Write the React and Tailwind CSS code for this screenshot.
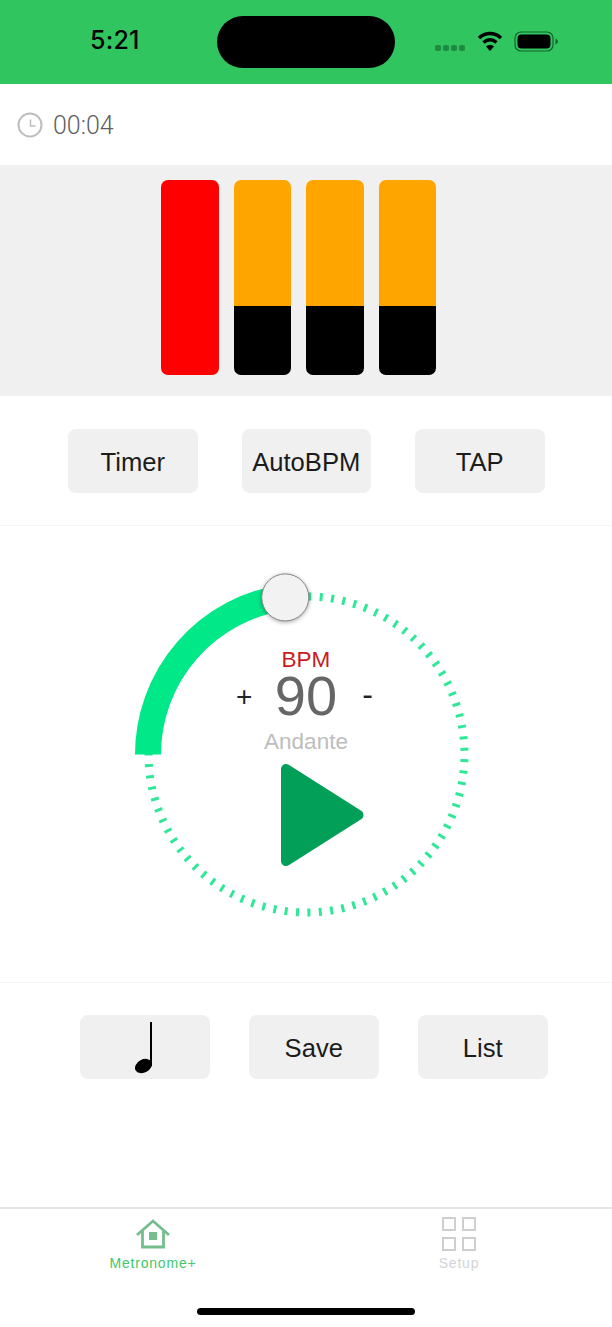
import React from "react";

const CX = 306.5;
const CY = 754.5;

// tick marks run clockwise from the top of the dial, degrees measured from 12 o'clock
const ticks = Array.from({ length: 87 }, (_, i) => 1.2 + i * (360 / 87)).filter(
  (deg) => deg < 272
);

const polar = (r, deg) => {
  const rad = (deg * Math.PI) / 180;
  return [CX + r * Math.sin(rad), CY - r * Math.cos(rad)];
};

const ActionButton = ({ children }) => (
  <button className="w-[129.5px] h-[64px] pt-[2px] rounded-[8px] bg-[#f0f0f0] flex items-center justify-center text-[25.6px] text-[#1c1c1c] font-['Liberation_Sans',sans-serif]">
    {children}
  </button>
);

const Bar = ({ red }) => (
  <div className="w-[57.5px] h-[194.5px] rounded-[7px] overflow-hidden flex flex-col">
    {red ? (
      <div className="flex-1 bg-[#ff0000]" />
    ) : (
      <>
        <div className="h-[126px] bg-[#ffa500]" />
        <div className="flex-1 bg-black" />
      </>
    )}
  </div>
);

const Dial = () => {
  const [tx, ty] = polar(158.5, -7.7);
  return (
    <svg width="612" height="456" viewBox="0 526 612 456" className="block">
      {ticks.map((deg) => {
        const [x1, y1] = polar(154, deg);
        const [x2, y2] = polar(162, deg);
        return (
          <line
            key={deg}
            x1={x1}
            y1={y1}
            x2={x2}
            y2={y2}
            stroke="#2ee897"
            strokeWidth="3"
          />
        );
      })}
      <path
        d={`M ${CX - 158.5} ${CY} A 158.5 158.5 0 0 1 ${tx} ${ty}`}
        fill="none"
        stroke="#00e887"
        strokeWidth="26"
      />
      <circle
        cx={tx}
        cy={ty}
        r="23.5"
        fill="#f2f2f2"
        stroke="#888888"
        strokeWidth="1"
        className="drop-shadow-[0_1px_2px_rgba(0,0,0,0.35)]"
      />
      <path
        d="M286 769 L358.5 815 L286 861 Z"
        fill="#029f59"
        stroke="#029f59"
        strokeWidth="10"
        strokeLinejoin="round"
      />
    </svg>
  );
};

export default function App() {
  return (
    <div className="w-[612px] h-[1327px] bg-white flex flex-col overflow-hidden font-['Liberation_Sans',sans-serif]">
      {/* Status bar */}
      <div className="relative h-[84px] bg-[#30c55e] shrink-0 flex items-center">
        <span className="ml-[90px] -mt-[3px] text-[25px] font-medium text-black font-['Inter',sans-serif] leading-none tracking-[0.2px]">
          5:21
        </span>
        <div className="absolute left-[217px] top-[16px] w-[178px] h-[52px] rounded-full bg-black" />
        <div className="absolute left-[435px] top-[45px] flex gap-[2px]">
          <span className="w-[6px] h-[6px] rounded-[2px] bg-[#1f8a45]" />
          <span className="w-[6px] h-[6px] rounded-[2px] bg-[#1f8a45]" />
          <span className="w-[6px] h-[6px] rounded-[2px] bg-[#1f8a45]" />
          <span className="w-[6px] h-[6px] rounded-[2px] bg-[#1f8a45]" />
        </div>
        <svg
          className="absolute left-[476px] top-[30px]"
          width="28"
          height="22"
          viewBox="0 0 26 22"
          fill="none"
          stroke="black"
          strokeWidth="3.6"
        >
          <path d="M2 8 C8.5 2 17.5 2 24 8" />
          <path d="M6.5 12.5 C10.5 9 15.5 9 19.5 12.5" />
          <path d="M13 20.5 L9.5 16.5 C11.5 15 14.5 15 16.5 16.5 Z" fill="black" strokeWidth="1" />
        </svg>
        <svg
          className="absolute left-[514px] top-[30px]"
          width="46"
          height="23"
          viewBox="0 0 46 23"
        >
          <rect x="1" y="2" width="38" height="19" rx="6" fill="none" stroke="#14622f" strokeWidth="1.2" />
          <rect x="3.5" y="4.5" width="33" height="14" rx="4" fill="black" />
          <path d="M41.5 8.5 Q44 10 44 11.5 Q44 13 41.5 14.5 Z" fill="#14622f" />
        </svg>
      </div>

      {/* Elapsed time */}
      <div className="h-[81px] shrink-0 flex items-center pl-[17px] gap-[10px]">
        <svg width="26" height="26" viewBox="0 0 26 26" fill="none" stroke="#bdbdbd" strokeWidth="2">
          <circle cx="13" cy="13" r="11.5" />
          <path d="M13.5 7.5 V14 H18.5" strokeWidth="1.5" />
        </svg>
        <span className="mt-[2px] text-[25px] font-light text-[#5f5f5f] font-['Roboto',sans-serif] leading-none">
          00:04
        </span>
      </div>

      {/* Beat bars */}
      <div className="h-[231px] shrink-0 bg-[#f0f0f0] flex items-start gap-[15px] pl-[161px] pt-[15px]">
        <Bar red />
        <Bar />
        <Bar />
        <Bar />
      </div>

      {/* Top buttons */}
      <div className="h-[130px] shrink-0 border-b border-[#f4f4f4] flex items-start gap-[44px] pl-[68px] pt-[33px]">
        <ActionButton>Timer</ActionButton>
        <ActionButton>AutoBPM</ActionButton>
        <ActionButton>TAP</ActionButton>
      </div>

      {/* Tempo dial */}
      <div className="relative h-[457px] shrink-0 border-b border-[#f4f4f4]">
        <Dial />
        <div className="absolute left-0 top-[121px] w-[612px] flex flex-col items-center">
          <span className="text-[22.5px] leading-[26px] text-[#cc1a22]">BPM</span>
          <div className="relative mt-[3px] w-[140px] flex justify-center">
            <span className="text-[56px] leading-[40px] text-[#666666]">90</span>
            <span className="absolute left-0 top-[5px] text-[28px] leading-[32px] text-[#222222]">+</span>
            <span className="absolute right-[3px] top-[2px] text-[32px] leading-[32px] text-[#222222]">-</span>
          </div>
          <span className="mt-[13px] text-[22.5px] leading-[26px] text-[#bdbdbd]">Andante</span>
        </div>
      </div>

      {/* Bottom buttons */}
      <div className="h-[224px] shrink-0 flex items-start gap-[39.5px] pl-[80px] pt-[32px]">
        <ActionButton>
          <svg width="24" height="52" viewBox="0 0 24 52">
            <rect x="17" y="0" width="2" height="44" fill="black" />
            <ellipse cx="10.5" cy="44" rx="9" ry="6.5" transform="rotate(-28 10.5 44)" fill="black" />
          </svg>
        </ActionButton>
        <ActionButton>Save</ActionButton>
        <ActionButton>List</ActionButton>
      </div>

      {/* Tab bar */}
      <div className="relative flex-1 border-t-2 border-[#e4e4e6]">
        <div className="absolute left-[109px] top-[9px] w-[88px] flex flex-col items-center">
          <svg width="36" height="32" viewBox="0 0 36 32" fill="none" stroke="#76bd8d" strokeWidth="2.8">
            <path d="M2 17 L18 3 L34 17" />
            <path d="M7.5 13 V29 H28.5 V13" />
            <rect x="14" y="14" width="8" height="8" fill="#76bd8d" stroke="none" />
          </svg>
          <span className="mt-[5px] text-[14px] leading-[16px] tracking-[0.8px] text-[#41c76b] whitespace-nowrap">
            Metronome+
          </span>
        </div>
        <div className="absolute left-[439px] top-[8px] w-[40px] flex flex-col items-center">
          <div className="grid grid-cols-2 gap-[6px]">
            <span className="w-[14px] h-[14px] border-[2.5px] border-[#cfcfcf]" />
            <span className="w-[14px] h-[14px] border-[2.5px] border-[#cfcfcf]" />
            <span className="w-[14px] h-[14px] border-[2.5px] border-[#cfcfcf]" />
            <span className="w-[14px] h-[14px] border-[2.5px] border-[#cfcfcf]" />
          </div>
          <span className="mt-[4px] text-[14px] leading-[16px] tracking-[0.8px] text-[#d4d4d8]">Setup</span>
        </div>
        <div className="absolute left-[197px] top-[99px] w-[218px] h-[7px] rounded-full bg-black" />
      </div>
    </div>
  );
}
